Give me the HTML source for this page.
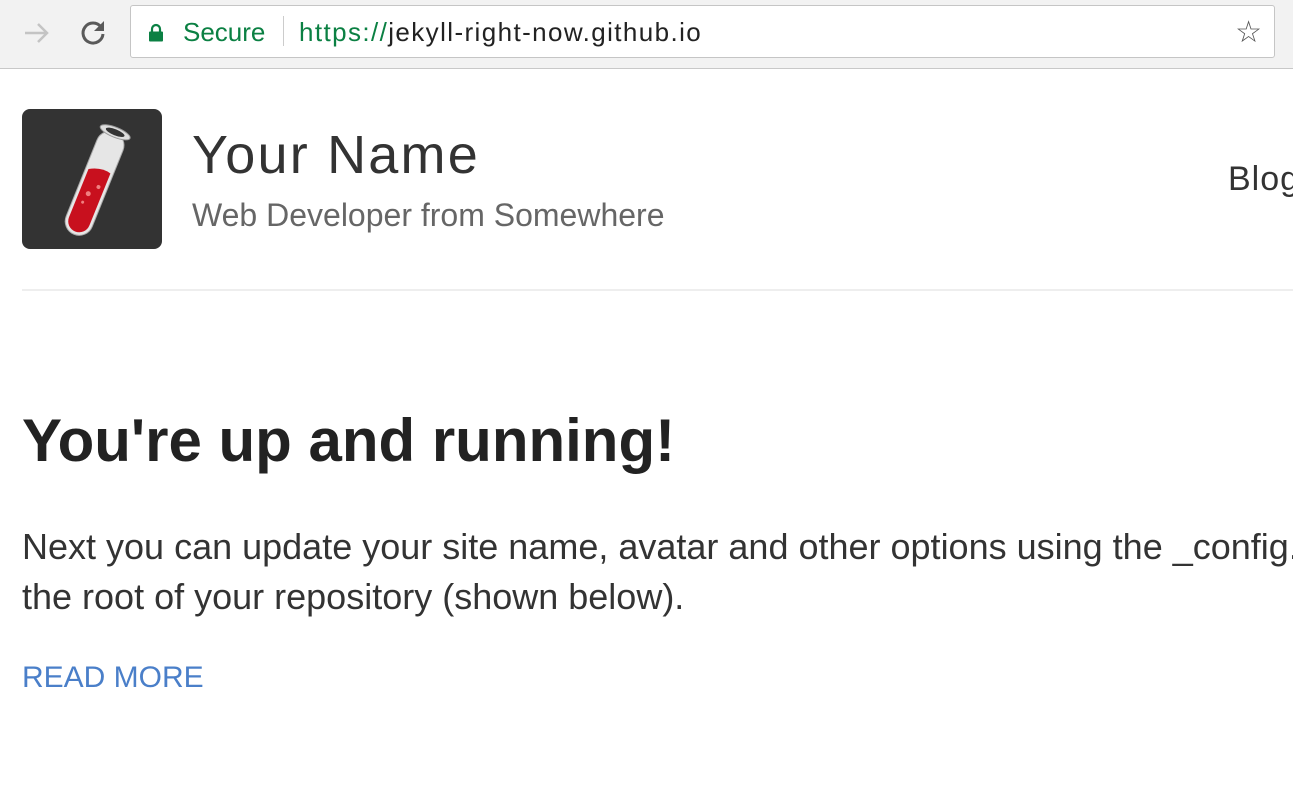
<!DOCTYPE html>
<html><head><meta charset="utf-8"><style>
body{margin:0;width:1293px;height:799px;overflow:hidden;background:#fff;font-family:"Liberation Sans",Arial,sans-serif;position:relative}
.bar{position:absolute;left:0;top:0;width:1293px;height:68px;background:#f2f2f2;border-bottom:1px solid #c8c8c8}
.omni{position:absolute;left:130px;top:5px;width:1143px;height:51px;background:#fff;border:1px solid #c5c5c5;border-radius:3px}
.t{position:absolute;white-space:nowrap}
</style></head><body>
<div class="bar">
<svg class="t" style="left:22px;top:18px" width="30" height="30" viewBox="0 0 30 30"><path d="M3 15H25M16 6l9 9-9 9" stroke="#c4c4c4" stroke-width="2.5" fill="none"/></svg>
<svg class="t" style="left:77px;top:16px" width="32" height="32" viewBox="0 0 32 32"><path d="M24 11A10 10 0 1 0 26 18" stroke="#5a5a5a" stroke-width="3" fill="none"/><path d="M27 5v10H17z" fill="#5a5a5a"/></svg>
<div class="omni">
<svg class="t" style="left:17px;top:17px" width="16" height="20" viewBox="0 0 16 20"><path d="M4 9V6a4 4 0 0 1 8 0v3" stroke="#0b8043" stroke-width="2.2" fill="none"/><rect x="1" y="8.5" width="14" height="10" rx="1" fill="#0b8043"/></svg>
<div class="t" style="left:52px;top:11px;font-size:26px;color:#0b8043">Secure</div>
<div class="t" style="left:152px;top:10px;width:1px;height:30px;background:#ccc"></div>
<div class="t" style="left:168px;top:11px;font-size:26px;color:#0b8043;letter-spacing:1.4px">https://<span style="color:#222">jekyll-right-now.github.io</span></div>
<div class="t" style="right:12px;top:9px;font-size:30px;color:#555">☆</div>
</div>
</div>
<div class="t" style="left:22px;top:109px;width:140px;height:140px;background:#333;border-radius:8px;overflow:hidden">
<svg width="140" height="140" viewBox="0 0 140 140"><g transform="rotate(22 70 70)">
<rect x="60" y="18" width="28" height="110" rx="14" fill="#e6e6e6" stroke="#aaa" stroke-width="1"/>
<path d="M63 62Q75 55 85 58V114a11 11 0 0 1-22 0z" fill="#c8101e"/>
<ellipse cx="74" cy="18" rx="16" ry="5" fill="#ddd" stroke="#999"/><ellipse cx="74" cy="18" rx="10" ry="3" fill="#333"/>
<circle cx="72" cy="85" r="2.5" fill="#f08080"/><circle cx="79" cy="75" r="2" fill="#f08080"/><circle cx="70" cy="95" r="1.5" fill="#f08080"/></g></svg></div>
<div class="t" style="left:192px;top:124px;font-size:54px;color:#333;letter-spacing:2.2px">Your Name</div>
<div class="t" style="left:192px;top:197px;font-size:32px;color:#666">Web Developer from Somewhere</div>
<div class="t" style="left:1228px;top:160px;font-size:34px;color:#333;letter-spacing:1px">Blog</div>
<div class="t" style="left:22px;top:289px;width:1271px;height:2px;background:#eee"></div>
<div class="t" style="left:22px;top:406px;font-size:60px;font-weight:bold;color:#222">You're up and running!</div>
<div class="t" style="left:22px;top:522px;font-size:36px;color:#333;line-height:50px">Next you can update your site name, avatar and other options using the _config.yml file in<br>the root of your repository (shown below).</div>
<div class="t" style="left:22px;top:661px;font-size:30px;color:#4a7fc9">READ MORE</div>
</body></html>
